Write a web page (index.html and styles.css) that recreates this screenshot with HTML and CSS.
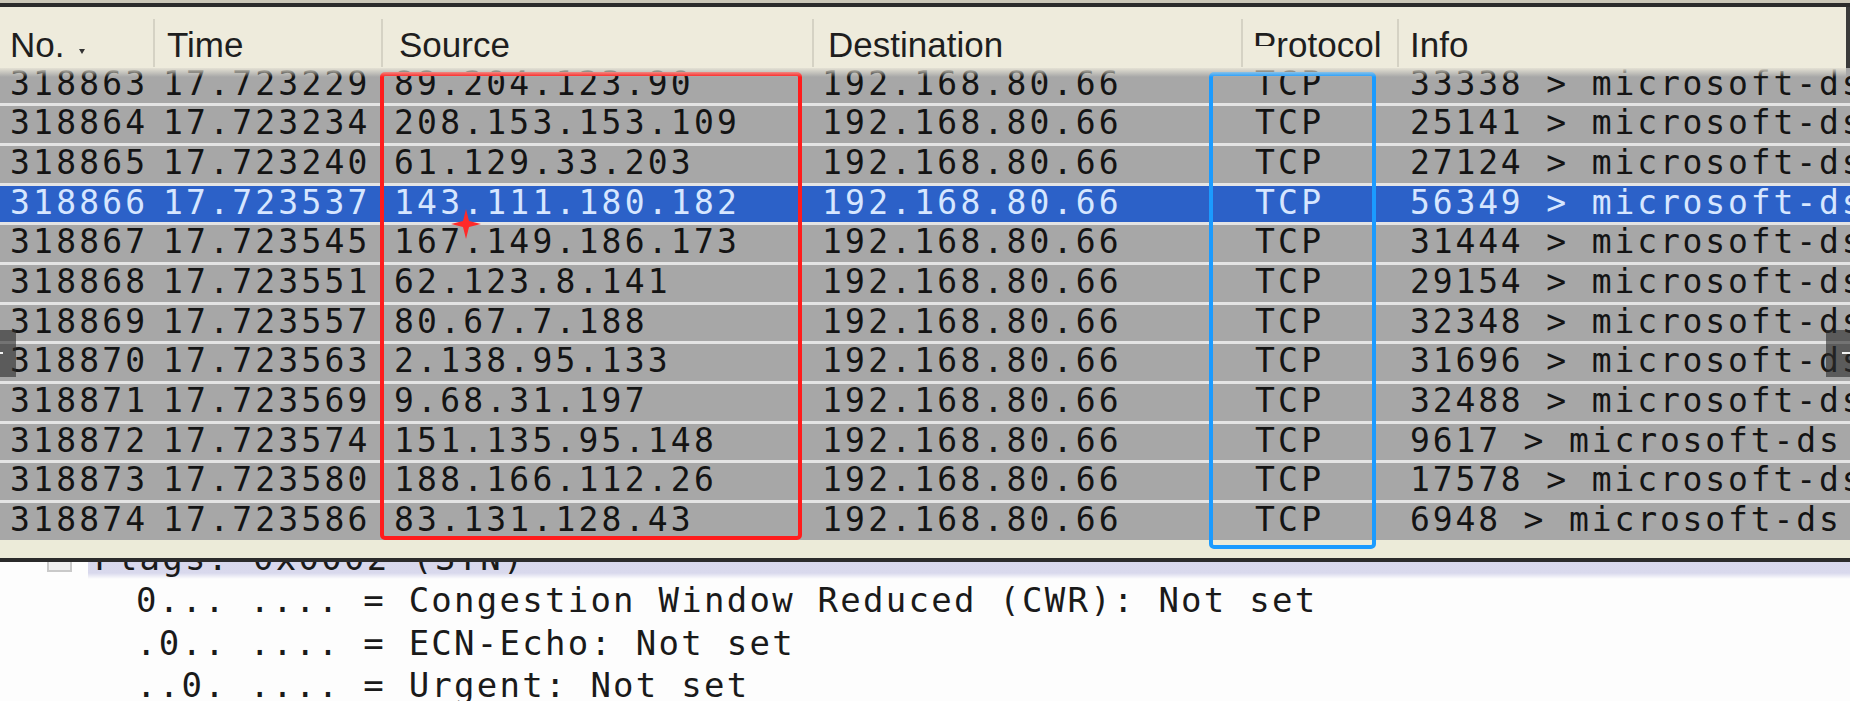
FILE: index.html
```html
<!DOCTYPE html>
<html>
<head>
<meta charset="utf-8">
<title>Packet list</title>
<link rel="stylesheet" href="styles.css">
</head>
<body>
<div class="app">
  <div class="list">
    <div class="topbar"></div>
    <div class="header cols">
      <div class="hcell h-no">No.<span class="sortarrow"></span></div>
      <div class="hcell h-time sep">Time</div>
      <div class="hcell h-src sep">Source</div>
      <div class="hcell h-dst sep">Destination</div>
      <div class="hcell h-proto sep"><span class="pcut">P</span>rotocol</div>
      <div class="hcell h-info sep">Info</div>
    </div>
    <div class="body">
      <div class="row cols first"><span class="c-no">318863</span><span class="c-time">17.723229</span><span class="c-src">89.204.123.90</span><span class="c-dst">192.168.80.66</span><span class="c-proto">TCP</span><span class="c-info">33338 &gt; microsoft-ds</span></div>
      <div class="row cols"><span class="c-no">318864</span><span class="c-time">17.723234</span><span class="c-src">208.153.153.109</span><span class="c-dst">192.168.80.66</span><span class="c-proto">TCP</span><span class="c-info">25141 &gt; microsoft-ds</span></div>
      <div class="row cols"><span class="c-no">318865</span><span class="c-time">17.723240</span><span class="c-src">61.129.33.203</span><span class="c-dst">192.168.80.66</span><span class="c-proto">TCP</span><span class="c-info">27124 &gt; microsoft-ds</span></div>
      <div class="row cols selected"><span class="c-no">318866</span><span class="c-time">17.723537</span><span class="c-src">143.111.180.182</span><span class="c-dst">192.168.80.66</span><span class="c-proto">TCP</span><span class="c-info">56349 &gt; microsoft-ds</span></div>
      <div class="row cols"><span class="c-no">318867</span><span class="c-time">17.723545</span><span class="c-src">167.149.186.173</span><span class="c-dst">192.168.80.66</span><span class="c-proto">TCP</span><span class="c-info">31444 &gt; microsoft-ds</span></div>
      <div class="row cols"><span class="c-no">318868</span><span class="c-time">17.723551</span><span class="c-src">62.123.8.141</span><span class="c-dst">192.168.80.66</span><span class="c-proto">TCP</span><span class="c-info">29154 &gt; microsoft-ds</span></div>
      <div class="row cols"><span class="c-no">318869</span><span class="c-time">17.723557</span><span class="c-src">80.67.7.188</span><span class="c-dst">192.168.80.66</span><span class="c-proto">TCP</span><span class="c-info">32348 &gt; microsoft-ds</span></div>
      <div class="row cols"><span class="c-no">318870</span><span class="c-time">17.723563</span><span class="c-src">2.138.95.133</span><span class="c-dst">192.168.80.66</span><span class="c-proto">TCP</span><span class="c-info">31696 &gt; microsoft-ds</span></div>
      <div class="row cols"><span class="c-no">318871</span><span class="c-time">17.723569</span><span class="c-src">9.68.31.197</span><span class="c-dst">192.168.80.66</span><span class="c-proto">TCP</span><span class="c-info">32488 &gt; microsoft-ds</span></div>
      <div class="row cols"><span class="c-no">318872</span><span class="c-time">17.723574</span><span class="c-src">151.135.95.148</span><span class="c-dst">192.168.80.66</span><span class="c-proto">TCP</span><span class="c-info">9617 &gt; microsoft-ds</span></div>
      <div class="row cols"><span class="c-no">318873</span><span class="c-time">17.723580</span><span class="c-src">188.166.112.26</span><span class="c-dst">192.168.80.66</span><span class="c-proto">TCP</span><span class="c-info">17578 &gt; microsoft-ds</span></div>
      <div class="row cols"><span class="c-no">318874</span><span class="c-time">17.723586</span><span class="c-src">83.131.128.43</span><span class="c-dst">192.168.80.66</span><span class="c-proto">TCP</span><span class="c-info">6948 &gt; microsoft-ds</span></div>
    </div>
    <div class="listfoot"></div>
  </div>
  <div class="divider"></div>
  <div class="details">
    <div class="dcontent">
      <div class="dline flagsline"><span class="expander"></span><span class="flagtext">Flags: 0x0002 (SYN)</span></div>
      <div class="dline sub">0... .... = Congestion Window Reduced (CWR): Not set</div>
      <div class="dline sub">.0.. .... = ECN-Echo: Not set</div>
      <div class="dline sub">..0. .... = Urgent: Not set</div>
    </div>
  </div>

  <div class="mark mark-red"></div>
  <div class="mark mark-blue"></div>
  <svg class="cursor" width="30" height="30" viewBox="0 0 30 30"><path d="M15 0 L18 12 L30 15 L18 18 L15 30 L12 18 L0 15 L12 12 Z" fill="#ff2a2a"/></svg>
  <div class="edgectl edge-left"><span class="tick"></span></div>
  <div class="edgectl edge-right"><span class="tick"></span></div>
</div>
</body>
</html>
```
FILE: styles.css
```css
html, body {
  margin: 0;
  padding: 0;
  background: #fdfdfd;
}
body {
  width: 1850px;
  height: 701px;
  overflow: hidden;
}
.app {
  position: relative;
  width: 1850px;
  height: 701px;
  overflow: hidden;
  background: #fdfdfd;
}

/* ---------- packet list ---------- */
.list {
  width: 1850px;
}
.topbar {
  height: 3px;
  background: #cbc7b8;
  border-bottom: 4px solid #2b2b2b;
}
.cols {
  display: grid;
  grid-template-columns: 153px 228px 431px 429px 156px 1fr;
}
.header {
  position: relative;
  z-index: 2;
  height: 61px;
  box-sizing: border-box;
  padding-top: 12px;
  background: #eeebdc;
  border-right: 4px solid #3a3a3a;
  font-family: "Liberation Sans", Arial, sans-serif;
  font-size: 35px;
  color: #1e1e1e;
}
.header::after {
  content: "";
  position: absolute;
  left: 0;
  right: 0;
  top: 100%;
  height: 9px;
  background: linear-gradient(to bottom, rgba(228, 225, 212, 1), rgba(168, 168, 168, 0));
}
.hcell {
  height: 48px;
  box-sizing: border-box;
  line-height: 39px;
  padding-top: 6px;
  white-space: nowrap;
  overflow: hidden;
}
.sep {
  border-left: 2px solid #d5d2c4;
}
.h-no { padding-left: 10px; }
.h-time { padding-left: 12px; }
.h-src { padding-left: 16px; }
.h-dst { padding-left: 14px; }
.h-proto { padding-left: 10px; }
.h-info { padding-left: 11px; }
.sortarrow {
  display: inline-block;
  width: 0;
  height: 0;
  margin-left: 15px;
  margin-bottom: 3px;
  border-left: 3.5px solid transparent;
  border-right: 3.5px solid transparent;
  border-top: 5px solid #333;
}
.pcut {
  display: inline-block;
  height: 21px;
  overflow: hidden;
  vertical-align: top;
}

.body {
  height: 472px;
  overflow: hidden;
  background: #a7a7a7;
  font-family: "DejaVu Sans Mono", monospace;
  font-size: 33px;
  letter-spacing: 3.2px;
  color: #141414;
}
.row {
  height: 39.66px;
  box-sizing: border-box;
  border-top: 3px solid #e4e4e4;
  background: #a7a7a7;
  line-height: 34.5px;
  white-space: nowrap;
}
.row.first {
  margin-top: -4.26px;
}
.row > span {
  overflow: hidden;
  display: block;
}
.row.selected {
  background: #2c61c8;
  color: #d6e6ff;
}
.c-no { padding-left: 10px; }
.c-time { padding-left: 10px; }
.c-src { padding-left: 13px; }
.c-dst { padding-left: 10px; }
.c-proto { padding-left: 14px; }
.c-info {
  padding-left: 13px;
  letter-spacing: 2.85px;
}

.listfoot {
  height: 18px;
  background: #ecebd9;
}
.divider {
  height: 4px;
  background: #2b2b2b;
}

/* ---------- details pane ---------- */
.details {
  height: 139px;
  overflow: hidden;
  background: #fdfdfd;
  font-family: "DejaVu Sans Mono", monospace;
  font-size: 34px;
  letter-spacing: 2.25px;
  color: #1a1a1a;
}
.dcontent {
  margin-top: -25px;
}
.dline {
  height: 42.3px;
  line-height: 42.3px;
  white-space: nowrap;
}
.flagsline {
  display: flex;
  align-items: flex-start;
}
.expander {
  flex: none;
  width: 21px;
  height: 21px;
  margin-left: 47px;
  margin-top: 10px;
  margin-right: 16px;
  border: 2px solid #c9c9c9;
  background: #f1f1f1;
}
.flagtext {
  flex: 1;
  padding-left: 6px;
  background: linear-gradient(to bottom, #d5d5ea 0, #d9d9ed 36px, #fdfdfd 42px);
}
.sub {
  padding-left: 136px;
}

/* ---------- overlays ---------- */
.mark {
  position: absolute;
  box-sizing: border-box;
  border-radius: 5px;
}
.mark-red {
  left: 380px;
  top: 72px;
  width: 422px;
  height: 468px;
  border: 4px solid #ff1c1c;
}
.mark-blue {
  left: 1209px;
  top: 72px;
  width: 167px;
  height: 477px;
  border: 4px solid #1b9bff;
}
.cursor {
  position: absolute;
  left: 451px;
  top: 209px;
}
.edgectl {
  position: absolute;
  top: 330px;
  height: 47px;
  background: rgba(45, 45, 45, 0.62);
}
.edge-left {
  left: 0;
  width: 16px;
}
.edge-right {
  right: 0;
  width: 24px;
}
.tick {
  position: absolute;
  top: 22px;
  height: 2px;
  background: #f2f2f2;
}
.edge-left .tick {
  left: 0;
  width: 3px;
}
.edge-right .tick {
  right: 0;
  width: 8px;
}
```
